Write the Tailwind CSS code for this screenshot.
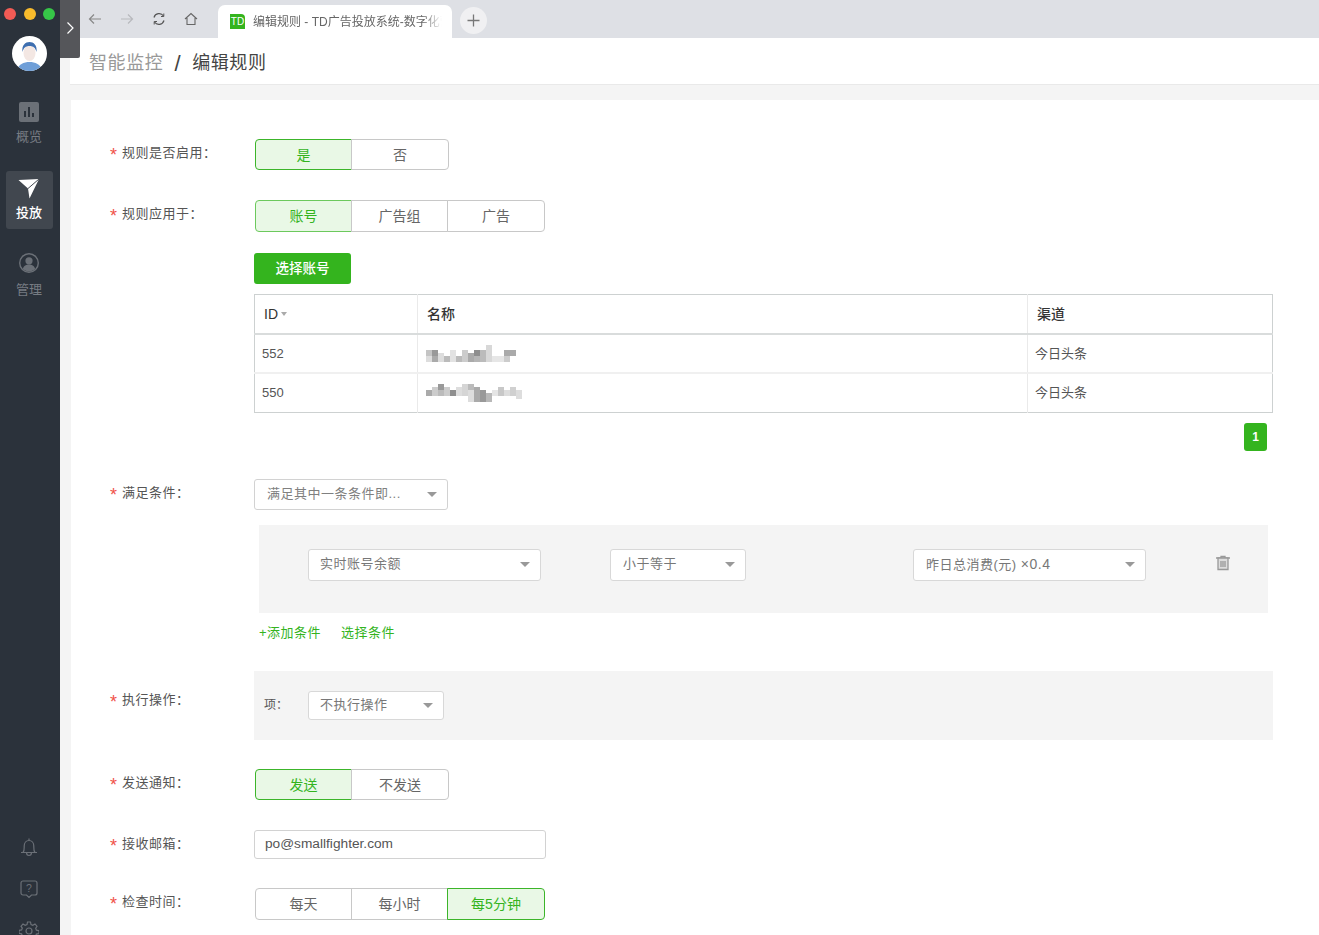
<!DOCTYPE html>
<html lang="en">
<head>
<meta charset="UTF-8" />
<script src="https://cdn.jsdelivr.net/npm/@tailwindcss/browser@4"></script>
<title>编辑规则 - TD广告投放系统</title>
</head>
<body class="h-[935px] overflow-hidden bg-[#f4f4f4] font-['Liberation_Sans','Noto_Sans_CJK_SC',sans-serif] text-[#555]">
<div class="relative flex h-[935px] overflow-hidden">

	<!-- sidebar -->
	<aside class="flex w-[60px] shrink-0 flex-col items-center bg-[#2b323b] pr-[2px] text-[13px] text-[#777c83]">
		<div class="mt-[8px] flex w-full gap-[7.5px] pl-[4px]">
			<span class="size-[12px] rounded-full bg-[#f25b55]"></span>
			<span class="size-[12px] rounded-full bg-[#f8bb2c]"></span>
			<span class="size-[12px] rounded-full bg-[#36c748]"></span>
		</div>
		<svg class="mt-[15.5px] size-[35px]" viewBox="0 0 35 35">
			<clipPath id="av"><circle cx="17.5" cy="17.5" r="17.5" /></clipPath>
			<g clip-path="url(#av)">
				<rect width="35" height="35" fill="#fff" />
				<path d="M5 35c1-7 7-9 12.500-9S29 28 30 35z" fill="#6f9fd8" />
				<ellipse cx="17.500" cy="17" rx="6" ry="8" fill="#f3e7e3" />
				<path d="M10.500 16c-1-7 3-10 7-10s8 3 7 10c-1-4-3-6-7-6s-6 2-7 6z" fill="#3e6fb0" />
			</g>
		</svg>
		<svg class="mt-[31.5px] size-[20px]" viewBox="0 0 20 20">
			<rect width="20" height="20" rx="2" fill="#6b7077" />
			<path d="M5 9h2v6H5zM9 5h2v10H9zM13 11h2v4h-2z" fill="#2b323b" />
		</svg>
		<span class="mt-[5px] leading-[20px]">概览</span>
		<div class="mt-[24px] flex h-[58px] w-[47px] flex-col items-center rounded-[3px] bg-[#41474f] pt-[6px] font-medium text-white">
			<svg class="size-[24px]" viewBox="0 0 24 24">
				<path d="M1.500 3 22 2 12.500 21.500 11 11.500z" fill="#fff" />
				<path d="M11 11.500 22 2" stroke="#41474f" stroke-width="1" />
			</svg>
			<span class="mt-[2px] leading-[20px]">投放</span>
		</div>
		<svg class="mt-[24px] size-[20px]" viewBox="0 0 20 20">
			<circle cx="10" cy="10" r="9.300" fill="none" stroke="#6b7077" stroke-width="1.400" />
			<circle cx="10" cy="7.800" r="3.600" fill="#6b7077" />
			<path d="M3.800 16c1-3.500 3.500-4.500 6.200-4.500s5.200 1 6.200 4.500c-3.500 3.200-8.900 3.200-12.400 0z" fill="#6b7077" />
		</svg>
		<span class="mt-[7px] leading-[20px]">管理</span>
		<svg class="mt-auto mb-[22px] size-[20px]" viewBox="0 0 20 20" fill="none" stroke="#6b7077" stroke-width="1.200">
			<path d="M2 15.500h16M4 15.500c1.500-1.500 1.200-4 1.200-6.500 0-3 2-5.500 4.800-5.500s4.800 2.500 4.800 5.500c0 2.500-.3 5 1.200 6.500M7.500 15.500c0 4 5 4 5 0M10 3.500V1.500" />
		</svg>
		<svg class="mb-[22px] size-[20px]" viewBox="0 0 20 20" fill="none" stroke="#6b7077" stroke-width="1.200">
			<path d="M4 2h12a2 2 0 0 1 2 2v10a2 2 0 0 1-2 2h-3.500L10 18.500 7.500 16H4a2 2 0 0 1-2-2V4a2 2 0 0 1 2-2z" />
			<text x="10" y="13" text-anchor="middle" font-size="10.500" fill="#6b7077" stroke="none">?</text>
		</svg>
		<svg class="mb-[-6px] size-[20px] shrink-0" viewBox="0 0 20 20" fill="none" stroke="#6b7077" stroke-width="1.200">
			<circle cx="10" cy="10" r="3" />
			<path d="M8.500 1h3l.5 2.500 1.800.8L16 3l2 2.200-1.300 2.100.7 1.800 2.600.5v3l-2.600.5-.7 1.800L18 16.800 16 19l-2.200-1.300-1.800.8-.5 2.500h-3l-.5-2.500-1.800-.8L4 19l-2-2.200 1.300-2.100-.7-1.800L0 12.400v-3l2.600-.5.7-1.800L2 5.200 4 3l2.200 1.300 1.800-.8z" />
		</svg>
	</aside>

	<!-- expand handle over the chrome -->
	<div class="absolute top-0 left-[60px] z-10 flex h-[58px] w-[20px] items-center justify-center rounded-br-[2px] bg-[#55565a]">
		<svg class="mb-[3px] size-[14px]" viewBox="0 0 14 14" fill="none" stroke="#fff" stroke-width="1.200"><path d="m4.500 1.500 5.500 5.500-5.500 5.500" /></svg>
	</div>

	<main class="min-w-0 flex-1">
		<!-- browser tabs -->
		<div class="flex h-[38px] items-end bg-[#dee0e5] pl-[20px]">
			<div class="flex w-[138px] items-center self-center pl-[8px] text-[#8b8d92]">
				<svg class="size-[14px]" viewBox="0 0 14 14" fill="none" stroke="#888" stroke-width="1.200"><path d="M13 7H2M6 2.500 1.500 7 6 11.500" /></svg>
				<svg class="ml-[18px] size-[14px]" viewBox="0 0 14 14" fill="none" stroke="#b8b9bd" stroke-width="1.200"><path d="M1 7h11M8 2.500 12.500 7 8 11.500" /></svg>
				<svg class="ml-[18px] size-[14px]" viewBox="0 0 14 14" fill="none" stroke="#555" stroke-width="1.200"><path d="M2 5.500A5.300 5.300 0 0 1 11.500 4M12 8.500A5.300 5.300 0 0 1 2.500 10" /><path d="M11.800 1.500v3H9M2.200 12.500v-3H5" stroke-width="1" /></svg>
				<svg class="ml-[18px] size-[14px]" viewBox="0 0 14 14" fill="none" stroke="#666" stroke-width="1.100"><path d="M1 7 7 1.500 13 7M3 6v6.500h8V6" /></svg>
			</div>
			<div class="flex h-[33px] w-[234px] items-center overflow-hidden rounded-t-[7px] bg-white pl-[12px]">
				<span class="flex h-[15px] w-[15px] shrink-0 items-center justify-center rounded-tr-[4px] bg-[#34b41e] text-[10px] leading-none text-white">TD</span>
				<div class="ml-[8px] w-[189px] overflow-hidden text-[12px] whitespace-nowrap text-[#666] [mask-image:linear-gradient(to_right,black_90%,transparent)]">编辑规则 - TD广告投放系统-数字化营</div>
			</div>
			<div class="mt-[2px] ml-[8px] flex size-[27px] items-center justify-center self-center rounded-full bg-[#f0f0f2]">
				<svg class="size-[13px]" viewBox="0 0 13 13" stroke="#777" stroke-width="1.300"><path d="M6.500.5v12M.5 6.500h12" /></svg>
			</div>
		</div>

		<!-- page title -->
		<header class="ml-[10px] flex h-[47px] items-center border-b border-[#e9e9e9] bg-white pt-[4px] pl-[19px] text-[18px] tracking-[.6px]">
			<span class="text-[#999]">智能监控</span>
			<span class="mx-[11px] text-[22px] font-light text-[#444]">/</span>
			<span class="text-[#444]">编辑规则</span>
		</header>

		<!-- form card -->
		<section class="mt-[15px] ml-[11px] h-[900px] bg-white pt-[39px] pl-[39px] text-[13px]">

			<div class="flex">
				<label class="w-[144px] shrink-0 pt-[4px] tracking-[.5px]"><span class="inline-block w-[12px] align-[-4px] text-[18px] leading-none text-[#f0524a]">*</span>规则是否启用：</label>
				<div class="ml-px flex h-[31px] text-[14px]">
					<button class="w-[97px] rounded-l-[4px] border border-[#3cb52a] bg-[#e9f8e6] pt-px text-[#34b41e]">是</button>
					<button class="-ml-px w-[98px] rounded-r-[4px] border border-[#c8c8c8] bg-white pt-px text-[#666]">否</button>
				</div>
			</div>

			<div class="mt-[30px] flex">
				<label class="w-[144px] shrink-0 pt-[4px] tracking-[.5px]"><span class="inline-block w-[12px] align-[-4px] text-[18px] leading-none text-[#f0524a]">*</span>规则应用于：</label>
				<div class="ml-px flex h-[32px] text-[14px]">
					<button class="w-[97px] rounded-l-[4px] border border-[#6cc95d] bg-[#e9f8e6] text-[#34b41e]">账号</button>
					<button class="-ml-px w-[97px] border border-[#c8c8c8] bg-white text-[#666]">广告组</button>
					<button class="-ml-px w-[98px] rounded-r-[4px] border border-[#c8c8c8] bg-white text-[#666]">广告</button>
				</div>
			</div>

			<div class="mt-[21px] ml-[144px] w-[1019px]">
				<button class="h-[31px] w-[97px] rounded-[3px] bg-[#34b41e] pt-px text-[13.500px] font-medium text-white">选择账号</button>
				<!-- accounts table -->
				<table class="mt-[10px] w-full table-fixed border-collapse border border-[#cdd1d1] text-[13px] text-[#555]">
					<colgroup><col class="w-[163px]" /><col class="w-[610px]" /><col /></colgroup>
					<thead class="text-[14px] font-medium text-[#333]">
						<tr class="h-[39.500px] border-b-2 border-[#d9dcdc] text-left">
							<th class="pl-[9px] font-medium">ID<span class="ml-[3px] inline-block border-x-[3px] border-t-[4px] border-x-transparent border-t-[#aaa] align-[3px]"></span></th>
							<th class="border-l border-[#eaeaea] pl-[9px] font-medium">名称</th>
							<th class="border-l border-[#eaeaea] pl-[9px] font-medium">渠道</th>
						</tr>
					</thead>
					<tbody>
						<tr class="h-[39px] border-b-2 border-[#f0f0f0]">
							<td class="pl-[7px]">552</td>
							<td class="border-l border-[#eaeaea] pl-[8px]">
								<svg class="block h-[18px] w-[92px]" viewBox="0 0 92 18" shape-rendering="crispEdges">
									<path d="M0 5h6v6H0z" fill="#c4c4c4" /><path d="M6 5h6v6H6z" fill="#999" /><path d="M0 11h6v6H0zM12 8h6v9h-6z" fill="#ddd" />
									<path d="M6 11h6v6H6z" fill="#aaa" /><path d="M18 11h6v6h-6zM30 11h6v6h-6z" fill="#bbb" /><path d="M24 5h6v12h-6z" fill="#e2e2e2" />
									<path d="M36 5h6v12h-6z" fill="#ccc" /><path d="M42 8h6v9h-6z" fill="#aaa" /><path d="M48 5h6v6h-6z" fill="#8e8e8e" /><path d="M48 11h6v6h-6z" fill="#b5b5b5" />
									<path d="M54 5h6v12h-6z" fill="#bbb" /><path d="M60 0h6v17h-6z" fill="#d8d8d8" /><path d="M66 11h12v6H66z" fill="#e6e6e6" /><path d="M78 5h12v6H78z" fill="#aaa" /><path d="M78 11h6v6h-6z" fill="#ccc" />
								</svg>
							</td>
							<td class="border-l border-[#eaeaea] pl-[7px]">今日头条</td>
						</tr>
						<tr class="h-[39px]">
							<td class="pl-[7px]">550</td>
							<td class="border-l border-[#eaeaea] pl-[8px]">
								<svg class="block h-[18px] w-[98px]" viewBox="0 0 98 18" shape-rendering="crispEdges">
									<path d="M0 6h6v6H0z" fill="#aaa" /><path d="M6 3h6v9H6z" fill="#ccc" /><path d="M12 0h6v6h-6z" fill="#999" /><path d="M12 6h6v6h-6z" fill="#bbb" />
									<path d="M18 3h6v9h-6z" fill="#ccc" /><path d="M24 6h6v6h-6z" fill="#8e8e8e" /><path d="M30 3h6v9h-6z" fill="#ddd" /><path d="M36 0h6v12h-6z" fill="#d5d5d5" />
									<path d="M42 0h6v6h-6z" fill="#bbb" /><path d="M42 6h6v12h-6z" fill="#ddd" /><path d="M48 3h6v15h-6z" fill="#aaa" /><path d="M54 6h6v12h-6z" fill="#999" /><path d="M60 9h6v9h-6z" fill="#b8b8b8" />
									<path d="M66 6h6v6h-6z" fill="#e5e5e5" /><path d="M72 3h6v9h-6z" fill="#c8c8c8" /><path d="M78 6h6v6h-6z" fill="#ddd" /><path d="M84 3h6v9h-6z" fill="#d0d0d0" /><path d="M90 6h6v9h-6z" fill="#ddd" />
								</svg>
							</td>
							<td class="border-l border-[#eaeaea] pl-[7px]">今日头条</td>
						</tr>
					</tbody>
				</table>
				<div class="mt-[10px] flex justify-end pr-[6px]">
					<span class="flex h-[28px] w-[23px] items-center justify-center rounded-[3px] bg-[#34b41e] text-[12px] font-bold text-white">1</span>
				</div>
			</div>

			<div class="mt-[28px] flex">
				<label class="w-[144px] shrink-0 pt-[4px] tracking-[.5px]"><span class="inline-block w-[12px] align-[-4px] text-[18px] leading-none text-[#f0524a]">*</span>满足条件：</label>
				<div class="flex h-[31px] w-[194px] items-center justify-between rounded-[3px] border border-[#d2d2d2] bg-white pr-[10px] pl-[12px] text-[#808080]">
					<span class="tracking-[.5px]">满足其中一条条件即...</span><i class="border-x-[5px] border-t-[5px] border-x-transparent border-t-[#999]"></i>
				</div>
			</div>

			<!-- conditions -->
			<div class="mt-[15px] ml-[149px] flex h-[88px] w-[1009px] items-center bg-[#f4f4f4] pb-[8px] text-[#777]">
				<div class="ml-[49px] flex h-[32px] w-[233px] items-center justify-between rounded-[3px] border-[1.5px] border-[#d8d8d8] bg-white pr-[10px] pb-px pl-[11px] tracking-[.5px]">
					<span>实时账号余额</span><i class="border-x-[5px] border-t-[5px] border-x-transparent border-t-[#999]"></i>
				</div>
				<div class="ml-[69px] flex h-[32px] w-[136px] items-center justify-between rounded-[3px] border-[1.5px] border-[#d8d8d8] bg-white pr-[10px] pb-px pl-[12px] tracking-[.5px]">
					<span>小于等于</span><i class="border-x-[5px] border-t-[5px] border-x-transparent border-t-[#999]"></i>
				</div>
				<div class="ml-[167px] flex h-[32px] w-[233px] items-center justify-between rounded-[3px] border-[1.5px] border-[#d8d8d8] bg-white pr-[10px] pb-px pl-[12px] tracking-[.5px]">
					<span>昨日总消费(元) <span class="text-[14px]">×0.4</span></span><i class="border-x-[5px] border-t-[5px] border-x-transparent border-t-[#999]"></i>
				</div>
				<svg class="mb-[4px] ml-[69px] size-[16px]" viewBox="0 0 16 16" stroke="#999" stroke-width="1.300">
					<path d="M1 3h14M6 3V1.300h4V3" fill="none" />
					<path d="M3 3v11.500h10V3z" fill="#ddd" />
					<path d="M6 6v6M8 6v6M10 6v6" fill="none" />
				</svg>
			</div>
			<div class="mt-[10px] ml-[149px] flex gap-[20px] tracking-[.5px] text-[#34b41e]">
				<a>+添加条件</a><a>选择条件</a>
			</div>

			<div class="mt-[29px] flex">
				<label class="w-[144px] shrink-0 pt-[19px] tracking-[.5px]"><span class="inline-block w-[12px] align-[-4px] text-[18px] leading-none text-[#f0524a]">*</span>执行操作：</label>
				<div class="flex h-[69px] w-[1019px] items-start bg-[#f4f4f4] pt-[20px] pl-[10px]">
					<span class="w-[44px] pt-[5px] text-[12px]">项：</span>
					<div class="flex h-[29px] w-[136px] items-center justify-between rounded-[3px] border-[1.5px] border-[#d8d8d8] bg-white pr-[10px] pb-px pl-[11px] tracking-[.5px] text-[#777]">
						<span>不执行操作</span><i class="border-x-[5px] border-t-[5px] border-x-transparent border-t-[#999]"></i>
					</div>
				</div>
			</div>

			<div class="mt-[29px] flex">
				<label class="w-[144px] shrink-0 pt-[4px] tracking-[.5px]"><span class="inline-block w-[12px] align-[-4px] text-[18px] leading-none text-[#f0524a]">*</span>发送通知：</label>
				<div class="ml-px flex h-[31px] text-[14px]">
					<button class="w-[97px] rounded-l-[4px] border border-[#3cb52a] bg-[#e9f8e6] pt-px text-[#34b41e]">发送</button>
					<button class="-ml-px w-[98px] rounded-r-[4px] border border-[#c8c8c8] bg-white pt-px text-[#666]">不发送</button>
				</div>
			</div>

			<div class="mt-[30px] flex">
				<label class="w-[144px] shrink-0 pt-[4px] tracking-[.5px]"><span class="inline-block w-[12px] align-[-4px] text-[18px] leading-none text-[#f0524a]">*</span>接收邮箱：</label>
				<div class="flex h-[29px] w-[292px] items-center rounded-[3px] border border-[#d2d2d2] pl-[10px] text-[13.700px] text-[#555]">po@smallfighter.com</div>
			</div>

			<div class="mt-[29px] flex">
				<label class="w-[144px] shrink-0 pt-[4px] tracking-[.5px]"><span class="inline-block w-[12px] align-[-4px] text-[18px] leading-none text-[#f0524a]">*</span>检查时间：</label>
				<div class="ml-px flex h-[32px] text-[14px]">
					<button class="w-[97px] rounded-l-[4px] border border-[#c8c8c8] bg-white text-[#666]">每天</button>
					<button class="-ml-px w-[97px] border border-[#c8c8c8] bg-white text-[#666]">每小时</button>
					<button class="z-10 -ml-px w-[98px] rounded-r-[4px] border border-[#3cb52a] bg-[#e9f8e6] text-[#34b41e]">每5分钟</button>
				</div>
			</div>
		</section>
	</main>
</div>
</body>
</html>
